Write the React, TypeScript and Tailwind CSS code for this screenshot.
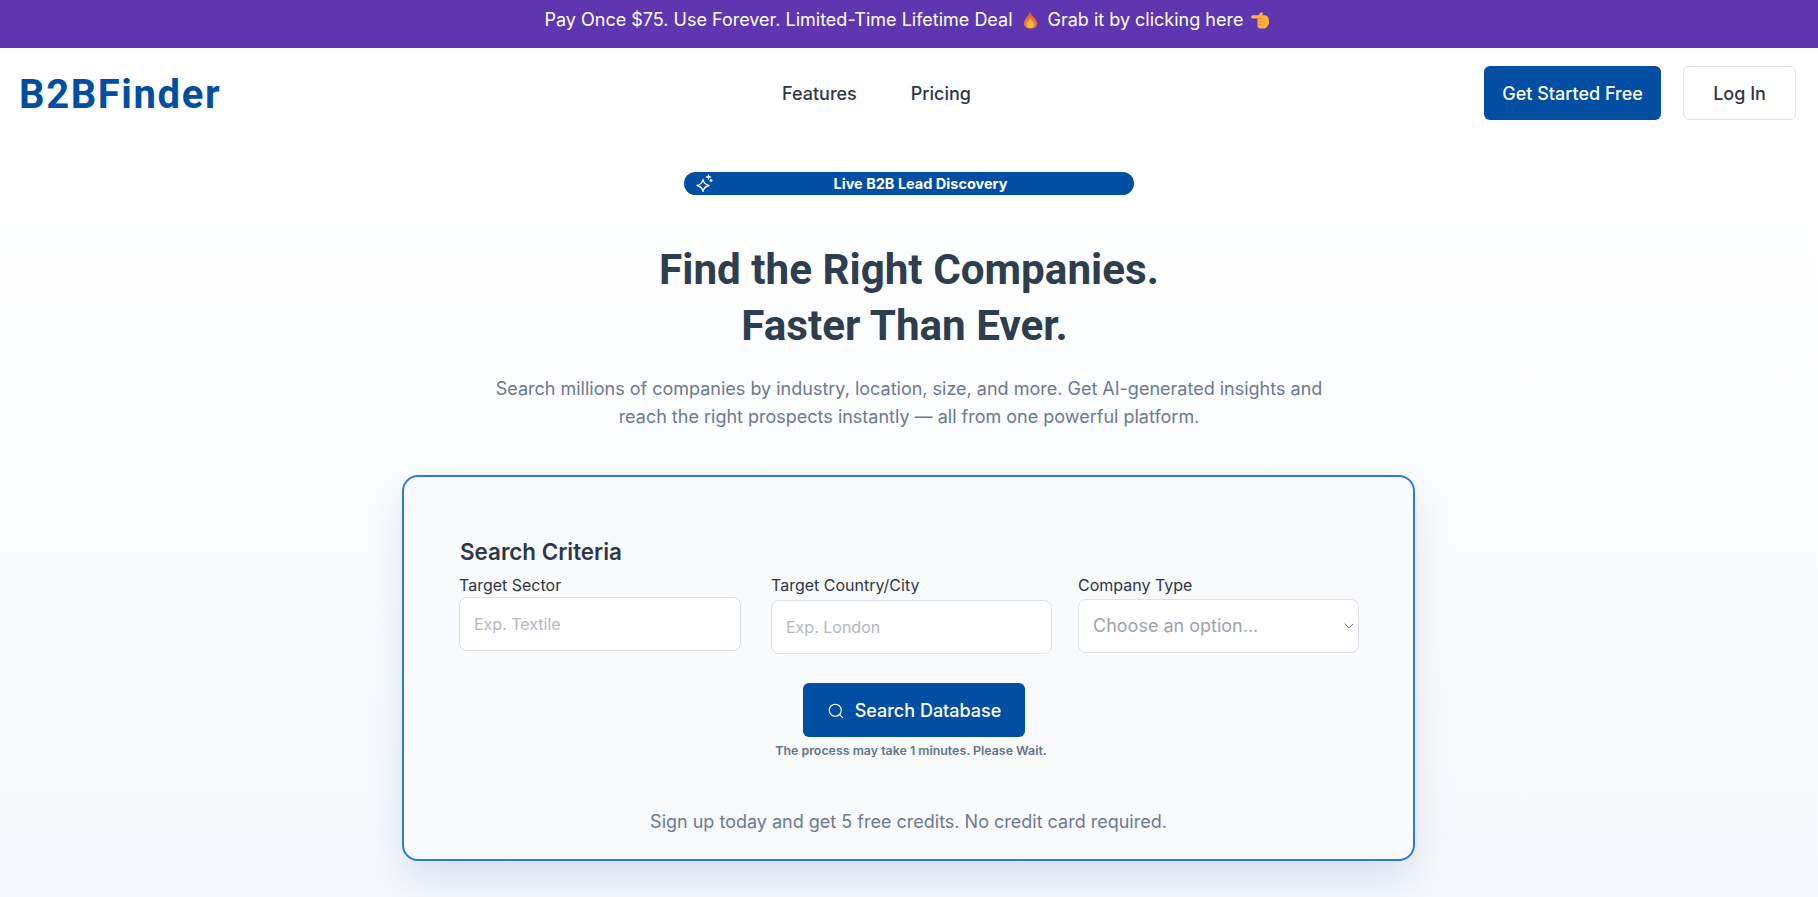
import { Search, ChevronDown } from "lucide-react";

const Fire = () => (
  <svg width="15" height="18" viewBox="0 0 15 18" className="inline-block shrink-0">
    <defs>
      <linearGradient id="f" x1="0" y1="0" x2="0" y2="1">
        <stop offset="0" stopColor="#e5533a" />
        <stop offset="1" stopColor="#f58a2c" />
      </linearGradient>
    </defs>
    <path d="M7 0.500c.6 3 3 4.300 4.500 6.500 1.300 1.900 2.500 3.500 2.500 5.500 0 3-2.800 5-6.500 5S1 15.500 1 12.500C1 8 5.800 5 7 0.500z" fill="url(#f)" />
    <path d="M7.500 7c.4 2 3.500 3.500 3.500 6.300 0 2.300-1.700 3.700-3.500 3.700S4 15.600 4 13.300C4 10.500 7 9 7.500 7z" fill="#fbb93f" />
  </svg>
);

const Hand = () => (
  <svg width="19" height="17" viewBox="0 0 19 17" className="-ml-[2px] inline-block shrink-0">
    <path d="M1.500 3.200H7.500L9.300 .8c.9-1 2.600-.5 2.600 1 0 .6-.2 1.100-.5 1.500h2c3 0 4.600 2.500 4.600 6.200 0 4.300-2.400 7-5.600 7h-2.400c-2.200 0-3.500-1.300-3.500-3V6.500H1.500C-.3 6.500-.3 3.200 1.500 3.200z" fill="#fbb03b" />
    <path d="M6.500 6.700h5M6.500 9.700h5M6.800 12.700h4.700" stroke="#e58a24" strokeWidth="1" fill="none" />
  </svg>
);

const Sparkle = () => (
  <svg width="20" height="20" viewBox="0 0 20 20" fill="none" stroke="#fff" strokeWidth="1.300" strokeLinejoin="round" strokeLinecap="round" className="absolute top-[1px] left-[10px]">
    <path d="M9 6.500c.6 3.400 2 5 6 6-4 1-5.400 2.600-6 6-.6-3.400-2-5-6-6 4-1 5.400-2.600 6-6z" />
    <path d="M14.500 2v4M12.500 4h4M17 6.500v2M16 7.500h2" />
  </svg>
);

function Label({ children }: { children: React.ReactNode }) {
  return <label className="block h-6 text-base leading-6 text-[#2d3748]">{children}</label>;
}

export default function App() {
  return (
    <div className="flex h-[897px] flex-col overflow-hidden bg-white font-['Inter',sans-serif]">
      <div className="flex h-12 shrink-0 items-center justify-center gap-[10px] bg-[#5e37b0] pr-[3px] pb-2 text-lg text-white">
        <span>Pay Once $75. Use Forever. Limited-Time Lifetime Deal</span>
        <Fire />
        <span>Grab it by clicking here</span>
        <Hand />
      </div>

      <header className="relative flex h-[92px] shrink-0 items-center justify-between bg-white pr-[22px] pl-[19px]">
        <div className="mt-[2px] font-['Roboto',sans-serif] text-[40px] leading-none font-bold tracking-[1.6px] text-[#024ea2]">B2BFinder</div>
        <nav className="absolute top-[34px] left-[782px] flex gap-[54px] text-lg leading-6 font-medium text-[#2d3748]">
          <a>Features</a>
          <a>Pricing</a>
        </nav>
        <div className="mb-[2px] flex gap-[22px]">
          <button className="flex h-[54px] w-[177px] items-center justify-center rounded-md bg-[#024ea2] pt-[2px] text-lg font-medium text-white">
            Get Started Free
          </button>
          <button className="flex h-[54px] w-[113px] items-center justify-center rounded-md border border-[#dde2ea] bg-white pt-[2px] text-lg font-medium text-[#2d3748]">
            Log In
          </button>
        </div>
      </header>

      <main className="flex flex-1 flex-col items-center bg-gradient-to-b from-white to-[#f5f8fc] pt-8">
        <div className="relative flex h-[23px] w-[450px] items-center justify-center rounded-full bg-[#024ea2] text-[14.5px] font-bold text-white">
          <Sparkle />
          <span className="ml-[23px]">Live B2B Lead Discovery</span>
        </div>

        <h1 className="mt-[47px] text-center font-['Roboto',sans-serif] text-[42.2px] leading-[56px] font-bold text-[#2d3e50]">
          Find the Right Companies.
          <span className="block pr-[9px]">Faster Than Ever.</span>
        </h1>

        <p className="mt-[21px] w-[860px] text-center text-lg leading-[28px] text-[#6b7a90]">
          Search millions of companies by industry, location, size, and more. Get AI-generated insights and
          <br />
          reach the right prospects instantly — all from one powerful platform.
        </p>

        <section className="mt-[44px] mr-[1px] flex h-[386px] w-[1013px] flex-col rounded-2xl border-2 border-[#2a7ade] bg-[#f8fafc] pt-[59px] pr-[54px] pl-[56px] shadow-[0_18px_40px_-4px_rgba(30,70,140,0.15)]">
          <h2 className="text-[22.4px] leading-8 font-semibold text-[#2d3748]">Search Criteria</h2>
          <div className="mt-[5px] flex items-start">
            <div className="-ml-[1px] w-[283px]">
              <Label>Target Sector</Label>
              <input
                placeholder="Exp. Textile"
                className="h-[54px] w-full rounded-lg border border-[#dde2ea] bg-white px-[14px] text-base outline-none placeholder:text-[#b4b7bd]"
              />
            </div>
            <div className="ml-[30px] w-[282px]">
              <Label>Target Country/City</Label>
              <input
                placeholder="Exp. London"
                className="mt-[3px] h-[54px] w-full rounded-lg border border-[#dde2ea] bg-white px-[14px] text-base outline-none placeholder:text-[#b4b7bd]"
              />
            </div>
            <div className="ml-[26px] w-[282px]">
              <Label>Company Type</Label>
              <div className="mt-[2px] flex h-[54px] w-full items-center justify-between rounded-lg border border-[#dde2ea] bg-white pr-[1px] pl-[14px] text-lg text-[#9ca3af]">
                <span>Choose an option...</span>
                <ChevronDown className="h-4 w-4 text-[#6b7280]" strokeWidth={1.5} />
              </div>
            </div>
          </div>
          <div className="mt-[29px] flex flex-col items-center">
            <button className="ml-[9px] flex h-[54px] w-[222px] items-center justify-center gap-[10px] rounded-md bg-[#024ea2] pt-[1px] text-lg font-medium text-white">
              <Search className="h-[18px] w-[18px]" strokeWidth={1.5} />
              Search Database
            </button>
            <p className="mt-[6px] ml-[3px] text-[12.4px] leading-[16px] font-semibold text-[#64748b]">
              The process may take 1 minutes. Please Wait.
            </p>
            <p className="mt-[49px] -ml-[2px] text-lg leading-7 text-[#6b7a90]">
              Sign up today and get 5 free credits. No credit card required.
            </p>
          </div>
        </section>
      </main>
    </div>
  );
}
